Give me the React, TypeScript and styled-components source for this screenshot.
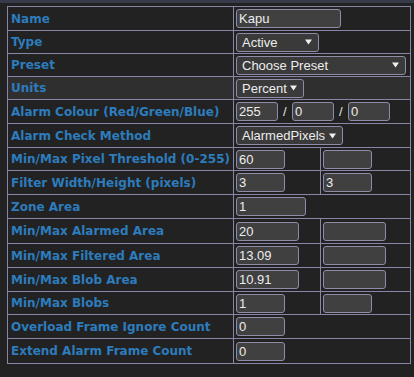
import React from 'react';
import styled, { createGlobalStyle } from 'styled-components';

const GlobalStyle = createGlobalStyle`
  html, body {
    margin: 0;
    padding: 0;
    background: #222222;
  }
`;

type Field =
  | { kind: 'input'; value: string; width: number }
  | { kind: 'select'; value: string; width: number }
  | { kind: 'rgb'; values: string[] };

interface RowData {
  label: string;
  fields: Field[];
  span?: boolean;
  hl?: boolean;
}

const rows: RowData[] = [
  { label: 'Name', span: true, fields: [{ kind: 'input', value: 'Kapu', width: 105 }] },
  { label: 'Type', span: true, fields: [{ kind: 'select', value: 'Active', width: 83 }] },
  { label: 'Preset', span: true, fields: [{ kind: 'select', value: 'Choose Preset', width: 170 }] },
  { label: 'Units', span: true, hl: true, fields: [{ kind: 'select', value: 'Percent', width: 68 }] },
  { label: 'Alarm Colour (Red/Green/Blue)', span: true, fields: [{ kind: 'rgb', values: ['255', '0', '0'] }] },
  { label: 'Alarm Check Method', span: true, fields: [{ kind: 'select', value: 'AlarmedPixels', width: 107 }] },
  {
    label: 'Min/Max Pixel Threshold (0-255)',
    fields: [
      { kind: 'input', value: '60', width: 49 },
      { kind: 'input', value: '', width: 49 },
    ],
  },
  {
    label: 'Filter Width/Height (pixels)',
    fields: [
      { kind: 'input', value: '3', width: 49 },
      { kind: 'input', value: '3', width: 49 },
    ],
  },
  { label: 'Zone Area', span: true, fields: [{ kind: 'input', value: '1', width: 70 }] },
  {
    label: 'Min/Max Alarmed Area',
    fields: [
      { kind: 'input', value: '20', width: 63 },
      { kind: 'input', value: '', width: 63 },
    ],
  },
  {
    label: 'Min/Max Filtered Area',
    fields: [
      { kind: 'input', value: '13.09', width: 63 },
      { kind: 'input', value: '', width: 63 },
    ],
  },
  {
    label: 'Min/Max Blob Area',
    fields: [
      { kind: 'input', value: '10.91', width: 63 },
      { kind: 'input', value: '', width: 63 },
    ],
  },
  {
    label: 'Min/Max Blobs',
    fields: [
      { kind: 'input', value: '1', width: 49 },
      { kind: 'input', value: '', width: 49 },
    ],
  },
  { label: 'Overload Frame Ignore Count', span: true, fields: [{ kind: 'input', value: '0', width: 49 }] },
  { label: 'Extend Alarm Frame Count', span: true, fields: [{ kind: 'input', value: '0', width: 49 }] },
];

function Arrow() {
  return (
    <svg width="7" height="6" viewBox="0 0 7 6">
      <polygon points="0,0.5 7,0.5 3.5,5.5" fill="#f0f0f0" />
    </svg>
  );
}

function renderField(f: Field) {
  if (f.kind === 'input') {
    return <TextInput defaultValue={f.value} style={{ width: f.width }} />;
  }
  if (f.kind === 'select') {
    return (
      <FakeSelect style={{ width: f.width }}>
        <span>{f.value}</span>
        <Arrow />
      </FakeSelect>
    );
  }
  return (
    <RgbGroup>
      {f.values.map((v, i) => (
        <React.Fragment key={i}>
          {i > 0 && <Slash>/</Slash>}
          <TextInput defaultValue={v} style={{ width: 42 }} />
        </React.Fragment>
      ))}
    </RgbGroup>
  );
}

export default function App() {
  return (
    <>
      <GlobalStyle />
      <Page>
        <TopStrip />
        <Table>
          {rows.map((row) => (
            <React.Fragment key={row.label}>
              <LabelCell $hl={row.hl}>{row.label}</LabelCell>
              {row.span ? (
                <ValueCell $hl={row.hl} $span>
                  {renderField(row.fields[0])}
                </ValueCell>
              ) : (
                row.fields.map((f, i) => (
                  <ValueCell key={i} $hl={row.hl}>
                    {renderField(f)}
                  </ValueCell>
                ))
              )}
            </React.Fragment>
          ))}
        </Table>
      </Page>
    </>
  );
}

const Page = styled.div`
  width: 414px;
  height: 377px;
  background: #222222;
  overflow: hidden;
`;

const TopStrip = styled.div`
  height: 3px;
  background: #363b4a;
  margin-bottom: 3px;
`;

const Table = styled.div`
  display: grid;
  grid-template-columns: 225px 86px 89px;
  grid-template-rows: 23px 22px 22px 22px 23px 23px 22px 23px 23px 24px 23px 23px 22px 23px 24px;
  gap: 1px;
  padding: 1px;
  margin-left: 7px;
  width: max-content;
  background: #8985a6;
`;

const LabelCell = styled.div<{ $hl?: boolean }>`
  display: flex;
  align-items: center;
  padding: 0 0 0 3px;
  background: ${(p) => (p.$hl ? '#2f2f2f' : '#222222')};
  color: #2d7cbd;
  font-family: 'DejaVu Sans', Verdana, sans-serif;
  font-weight: bold;
  font-size: 12px;
  white-space: nowrap;
`;

const ValueCell = styled.div<{ $hl?: boolean; $span?: boolean }>`
  display: flex;
  align-items: center;
  padding: 0 0 0 2px;
  background: ${(p) => (p.$hl ? '#2f2f2f' : '#222222')};
  grid-column: ${(p) => (p.$span ? 'span 2' : 'auto')};
`;

const TextInput = styled.input`
  box-sizing: border-box;
  height: 19px;
  padding: 0 2px;
  margin: 0;
  border: 1px solid #8e8ca6;
  border-radius: 3px;
  background: #404040;
  color: #ededed;
  font-family: 'Liberation Sans', Arial, sans-serif;
  font-size: 13px;
  outline: none;
`;

const FakeSelect = styled.div`
  box-sizing: border-box;
  display: flex;
  align-items: center;
  justify-content: space-between;
  height: 19px;
  padding: 0 6px 0 5px;
  border: 1px solid #8e8ca6;
  border-radius: 3px;
  background: #3a3a3a;
  color: #ededed;
  font-family: 'Liberation Sans', Arial, sans-serif;
  font-size: 13px;
  white-space: nowrap;
`;

const RgbGroup = styled.div`
  display: flex;
  align-items: center;
  gap: 5px;
`;

const Slash = styled.span`
  color: #e0e0e0;
  font-family: 'Liberation Sans', Arial, sans-serif;
  font-size: 13px;
  width: 4px;
`;
